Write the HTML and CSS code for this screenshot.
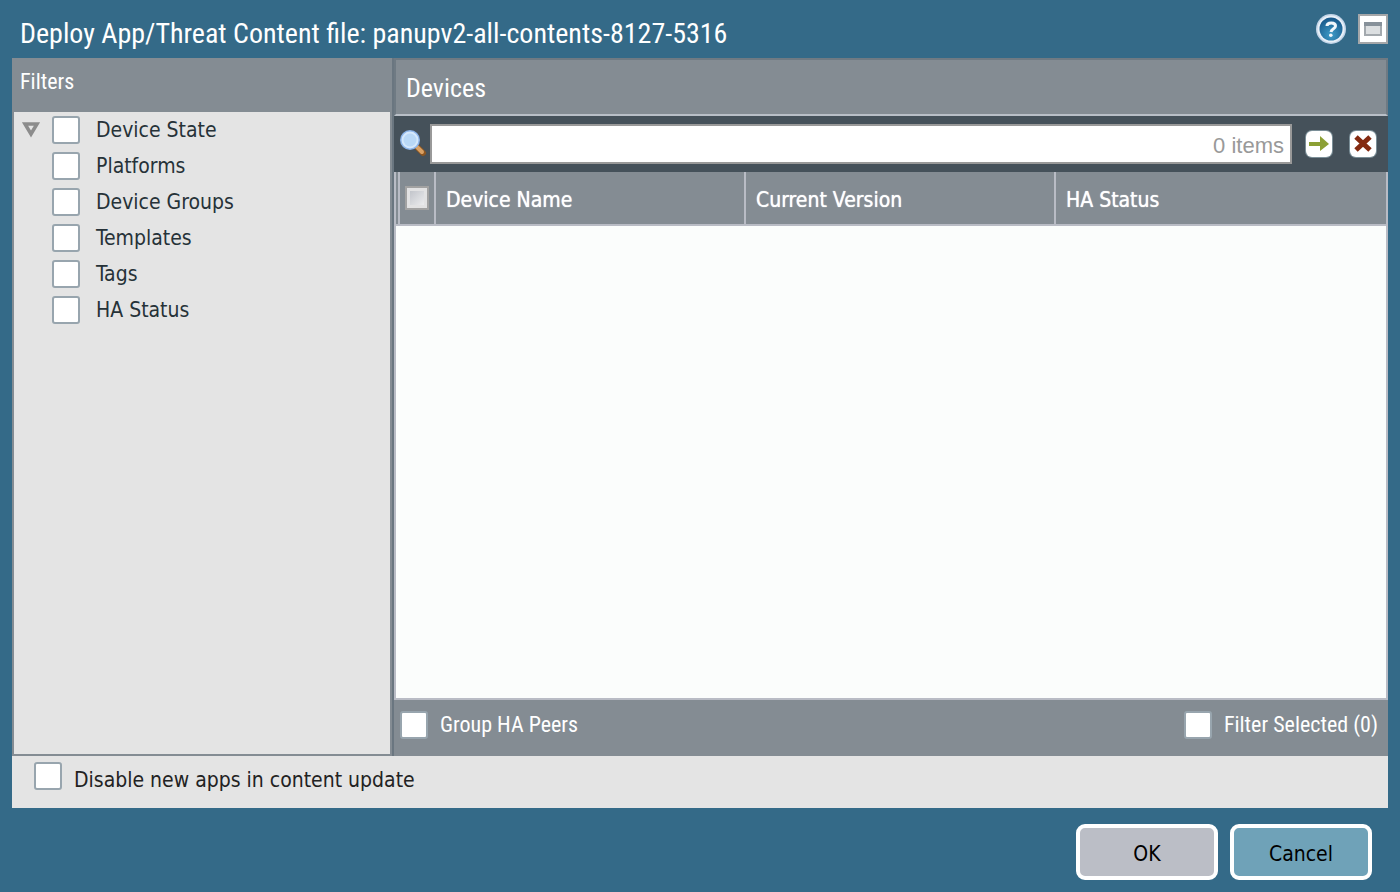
FILE: index.html
```
<!DOCTYPE html>
<html lang="en">

<head>
    <meta charset="UTF-8">
    <meta name="viewport" content="width=device-width, initial-scale=1.0">
    <title>Deploy App/Threat Content file</title>
    <link rel="stylesheet" href="styles.css">
</head>

<body>

    <header class="title-bar">
        <h1>Deploy App/Threat Content file: panupv2-all-contents-8127-5316</h1>
        <div class="tools">
            <button type="button" class="icon-btn" aria-label="Help">
                <svg width="30" height="30" viewBox="0 0 30 30">
                    <defs>
                        <radialGradient id="helpFill" cx="50%" cy="75%" r="70%">
                            <stop offset="0" stop-color="#3e9cc8"/>
                            <stop offset="1" stop-color="#195a8c"/>
                        </radialGradient>
                    </defs>
                    <circle cx="15" cy="15" r="15" fill="#c3d5e8"/>
                    <circle cx="15" cy="15" r="13.5" fill="#e8f0f8"/>
                    <circle cx="15" cy="15" r="11.5" fill="url(#helpFill)"/>
                    <path d="M11 12 C11 8 19.5 8 19.5 12 C19.5 15 15.5 14.5 15 18" fill="none" stroke="#f0f6fb" stroke-width="3"/>
                    <circle cx="14.8" cy="21.2" r="1.8" fill="#f0f6fb"/>
                </svg>
            </button>
            <button type="button" class="icon-btn" aria-label="Maximize">
                <svg width="30" height="30" viewBox="0 0 30 30">
                    <rect x="1" y="1" width="28" height="28" fill="#fff" stroke="#a5a7a9" stroke-width="2"/>
                    <rect x="7" y="9" width="16" height="12" fill="#dcdfe1" stroke="#a3a9ae" stroke-width="2"/>
                    <path d="M6 10 H24" stroke="#87919a" stroke-width="4"/>
                </svg>
            </button>
        </div>
    </header>

    <main class="content">
        <section class="filters">
            <h2>Filters</h2>
            <ul class="filter-list">
                <li>
                    <button type="button" class="toggle" aria-label="Collapse">
                        <svg width="20" height="18" viewBox="0 0 20 18">
                            <path d="M4 3 H16 L10 13 Z" fill="#e4e4e4" stroke="#8c8c8c" stroke-width="3.5"/>
                        </svg>
                    </button>
                    <label><input type="checkbox" class="check">Device State</label>
                </li>
                <li><label><input type="checkbox" class="check">Platforms</label></li>
                <li><label><input type="checkbox" class="check">Device Groups</label></li>
                <li><label><input type="checkbox" class="check">Templates</label></li>
                <li><label><input type="checkbox" class="check">Tags</label></li>
                <li><label><input type="checkbox" class="check">HA Status</label></li>
            </ul>
        </section>

        <section class="devices">
            <h2>Devices</h2>
            <div class="search-bar">
                <svg class="search-icon" width="28" height="28" viewBox="0 0 28 28">
                    <path d="M19 18 L24 23" stroke="#8a5522" stroke-width="6" stroke-linecap="round"/>
                    <path d="M18 17 L23 22" stroke="#d9a063" stroke-width="4" stroke-linecap="round"/>
                    <circle cx="11" cy="10" r="10" fill="#8db5ea"/>
                    <circle cx="11" cy="10" r="8.5" fill="#d5e8fb"/>
                    <circle cx="11" cy="10" r="6.5" fill="#b9d8f6"/>
                </svg>
                <div class="search-box">
                    <input type="text" aria-label="Search devices">
                    <span class="count">0 items</span>
                </div>
                <button type="button" class="icon-btn" aria-label="Apply filter">
                    <svg width="28" height="28" viewBox="0 0 28 28">
                        <rect x="0" y="0" width="28" height="28" rx="7" fill="#7b8f98"/>
                        <rect x="1" y="1" width="26" height="26" rx="6" fill="#fff"/>
                        <path d="M4 12 H15 V6 L24 14 L15 21 V16 H4 Z" fill="#8ca035"/>
                    </svg>
                </button>
                <button type="button" class="icon-btn" aria-label="Clear filter">
                    <svg width="28" height="28" viewBox="0 0 28 28">
                        <rect x="0" y="0" width="28" height="28" rx="7" fill="#7b8f98"/>
                        <rect x="1" y="1" width="26" height="26" rx="6" fill="#fff"/>
                        <path d="M7 7 L21 20 M21 7 L7 20" stroke="#842a10" stroke-width="5"/>
                    </svg>
                </button>
            </div>
            <div class="grid">
                <table>
                    <colgroup>
                        <col class="col-edge">
                        <col class="col-check">
                        <col class="col-name">
                        <col class="col-version">
                        <col>
                    </colgroup>
                    <thead>
                        <tr>
                            <td></td>
                            <th class="check-cell"><input type="checkbox" class="check-all" aria-label="Select all"></th>
                            <th>Device Name</th>
                            <th>Current Version</th>
                            <th>HA Status</th>
                        </tr>
                    </thead>
                    <tbody></tbody>
                </table>
            </div>
            <div class="grid-footer">
                <label><input type="checkbox" class="check">Group HA Peers</label>
                <label><input type="checkbox" class="check">Filter Selected (0)</label>
            </div>
        </section>
    </main>

    <div class="options">
        <label><input type="checkbox" class="check">Disable new apps in content update</label>
    </div>

    <footer class="actions">
        <button type="button" class="btn btn-ok">OK</button>
        <button type="button" class="btn btn-cancel">Cancel</button>
    </footer>

</body>

</html>
```
FILE: styles.css
```
* {
    box-sizing: border-box;
}

body {
    margin: 0;
    padding: 0 12px;
    min-height: 100vh;
    display: flex;
    flex-direction: column;
    background-color: #346a88;
    color: #263238;
    font-family: "DejaVu Sans Condensed", "Noto Sans", sans-serif;
    font-size: 21px;
    line-height: 28px;
}

h1,
h2 {
    margin: 0;
    color: #fff;
    font-family: "Roboto Condensed", Roboto, sans-serif;
    font-weight: normal;
}

button {
    font: inherit;
    cursor: pointer;
}

label {
    display: flex;
    align-items: center;
    gap: 16px;
}

.icon-btn,
.toggle {
    padding: 0;
    border: none;
    background: none;
    display: flex;
}

.check {
    appearance: none;
    flex: none;
    width: 28px;
    height: 28px;
    margin: 0;
    background-color: #fff;
    border: 2px solid #98a5ae;
    border-radius: 3px;
}

.title-bar {
    display: flex;
    justify-content: space-between;
    height: 58px;
    padding: 14px 0 0 8px;
}

.title-bar h1 {
    font-size: 28px;
    line-height: 40px;
}

.tools {
    display: flex;
    gap: 12px;
}

.content {
    flex: 1;
    display: flex;
}

/* left side */
.filters {
    width: 380px;
    background-color: #e4e4e4;
    border: 2px solid #848c93;
    border-top: none;
}

.filters h2 {
    height: 54px;
    padding: 8px 6px;
    background-color: #848c93;
    font-size: 22px;
    line-height: 32px;
}

.filter-list {
    list-style: none;
    margin: 0;
    padding: 0;
}

.filter-list li {
    display: flex;
    align-items: center;
    justify-content: flex-start;
    height: 36px;
    padding-left: 38px;
}

.filter-list .toggle {
    width: 20px;
    margin-left: -31px;
    margin-right: 11px;
}

/* right side */
.devices {
    flex: 1;
    display: flex;
    flex-direction: column;
    border-left: 2px solid #6a7680;
}

.devices h2 {
    height: 58px;
    padding: 10px;
    background-color: #848c93;
    border: 2px solid #6f7a83;
    border-bottom-color: #b9bfc7;
    font-size: 26px;
    line-height: 36px;
}

.search-bar {
    display: flex;
    align-items: center;
    height: 56px;
    padding: 0 11px 0 5px;
    background-color: #45515a;
}

.search-bar .icon-btn {
    margin-left: 13px;
}

.search-bar .icon-btn + .icon-btn {
    margin-left: 16px;
}

.search-box {
    flex: 1;
    display: flex;
    align-items: center;
    height: 40px;
    margin-left: 3px;
    padding-right: 6px;
    background-color: #fff;
    border: 2px solid #999;
}

.search-box input {
    flex: 1;
    height: 36px;
    border: none;
    outline: none;
    font: inherit;
}

.count {
    padding-top: 4px;
    color: #999;
    font-family: "Liberation Sans", Arial, sans-serif;
    font-size: 22px;
}

.grid {
    flex: 1;
    background-color: #fbfdfc;
    border: 2px solid #b9bcc5;
    border-top: none;
}

.grid table {
    width: 100%;
    table-layout: fixed;
    border-collapse: separate;
    border-spacing: 0;
}

.grid thead td,
.grid th {
    height: 54px;
    padding: 4px 10px 0;
    background-color: #848c93;
    border-right: 2px solid #b9bcc5;
    border-bottom: 2px solid #b9bcc5;
    color: #fff;
    font-weight: normal;
    text-align: left;
    text-shadow: 0 0 1px #fff;
}

.grid thead td {
    padding: 0;
}

.grid th:last-child {
    border-right: none;
}

.grid .check-cell {
    padding: 0 5px;
}

.col-edge {
    width: 4px;
}

.col-check {
    width: 36px;
}

.col-name,
.col-version {
    width: 310px;
}

.check-all {
    appearance: none;
    display: block;
    width: 24px;
    height: 24px;
    margin: 0;
    background: linear-gradient(135deg, #b9bcc3, #f4f4f5);
    border: 2px solid #a2a2a2;
    box-shadow: inset 0 0 0 3px #e2e2e3;
}

.grid-footer {
    display: flex;
    justify-content: space-between;
    height: 56px;
    padding: 10px 10px 0 6px;
    background-color: #848c93;
    color: #fff;
    font-family: "Roboto Condensed", Roboto, sans-serif;
    font-size: 22px;
}

.grid-footer label {
    height: 30px;
    gap: 12px;
}

/* bottom */
.options {
    height: 52px;
    padding: 6px 22px;
    background-color: #e4e4e4;
    color: #222;
}

.options label {
    align-items: flex-start;
    width: max-content;
    gap: 12px;
    line-height: 36px;
}

.actions {
    display: flex;
    justify-content: flex-end;
    gap: 12px;
    height: 84px;
    padding: 16px 16px 12px;
}

.btn {
    width: 142px;
    padding: 4px 0 0;
    border: 4px solid #fff;
    border-radius: 9px;
    color: #000;
}

.btn-ok {
    background-color: #bbbec6;
}

.btn-cancel {
    background-color: #6fa2b8;
}
```
